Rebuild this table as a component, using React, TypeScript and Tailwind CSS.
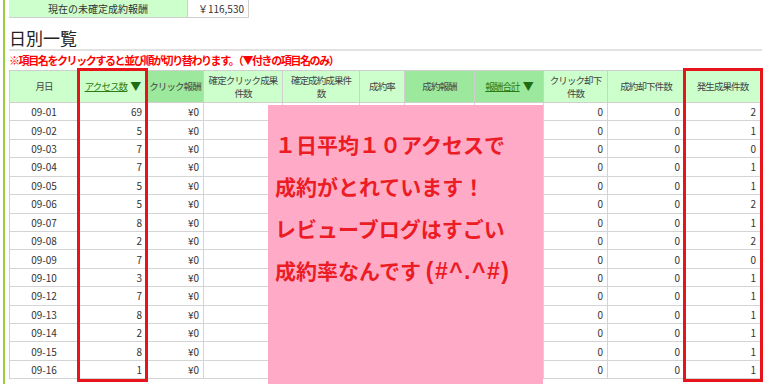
import React from "react";

const cols = "grid-cols-[69px_68px_57px_79px_77px_45px_70px_69px_64px_77px_76px]";

const rows: [string, number, number][] = [
  ["09-01", 69, 2],
  ["09-02", 5, 1],
  ["09-03", 7, 0],
  ["09-04", 7, 1],
  ["09-05", 5, 1],
  ["09-06", 5, 2],
  ["09-07", 8, 1],
  ["09-08", 2, 2],
  ["09-09", 7, 0],
  ["09-10", 3, 1],
  ["09-12", 7, 1],
  ["09-13", 8, 1],
  ["09-14", 2, 1],
  ["09-15", 8, 1],
  ["09-16", 1, 1],
];

function Head({ children, dark }: { children: React.ReactNode; dark?: boolean }) {
  return (
    <div
      className={`flex items-center justify-center overflow-hidden text-center text-[9.5px] leading-[13px] border-r border-b border-[#cfcfcf] whitespace-nowrap tracking-[-0.9px] ${
        dark ? "bg-[#9ce89c]" : "bg-[#ccffcc]"
      }`}
    >
      {children}
    </div>
  );
}

function Cell({ children, center }: { children?: React.ReactNode; center?: boolean }) {
  return (
    <div
      className={`flex items-center border-r border-b border-[#d4d4d4] bg-white px-[4px] ${
        center ? "justify-center" : "justify-end"
      }`}
    >
      {children}
    </div>
  );
}

function SortLink({ label }: { label: string }) {
  return (
    <span className="flex items-center gap-[3px]">
      <span className="underline text-[#2d7a0f]">{label}</span>
      <span className="text-[#1f6b12] text-[11px]">▼</span>
    </span>
  );
}

export default function App() {
  return (
    <div
      className="relative w-[765px] h-[384px] overflow-hidden bg-white text-[#333]"
      style={{ fontFamily: '"MS Gothic", "Noto Sans CJK JP", sans-serif' }}
    >
      <div className="ml-[3px] h-full border-l-2 border-[#9ccc3c] pl-[4px]">
        {/* summary row (cut off at the top) */}
        <div className="flex h-[18px] w-[240px] text-[10px]">
          <div className="flex w-[179px] items-center justify-center bg-[#ccffcc] border-r border-b border-[#cfcfcf]">
            現在の未確定成約報酬
          </div>
          <div className="flex w-[61px] items-center justify-end pr-[4px] border-r border-b border-[#cfcfcf]">
            ￥116,530
          </div>
        </div>

        <div className="flex h-[33px] items-end border-b-2 border-[#e2e2e2] pb-[1px] w-[753px]">
          <h2 className="text-[17px] leading-[21px] text-[#222]">日別一覧</h2>
        </div>

        <p className="flex h-[19px] items-center text-[11px] font-bold text-[#ff0000] tracking-[-1.4px]">
          ※項目名をクリックすると並び順が切り替わります。（▼付きの項目名のみ）
        </p>

        {/* daily table */}
        <div className="w-[751px] border-l border-t border-[#cfcfcf] text-[10px]">
          <div className={`grid ${cols} h-[32px] text-[#444]`}>
            <Head>月日</Head>
            <Head>
              <SortLink label="アクセス数" />
            </Head>
            <Head dark>クリック報酬</Head>
            <Head>
              確定クリック成果
              <br />
              件数
            </Head>
            <Head>
              確定成約成果件
              <br />
              数
            </Head>
            <Head>成約率</Head>
            <Head dark>成約報酬</Head>
            <Head dark>
              <SortLink label="報酬合計" />
            </Head>
            <Head>
              クリック却下
              <br />
              件数
            </Head>
            <Head>成約却下件数</Head>
            <Head>発生成果件数</Head>
          </div>

          {rows.map(([day, access, occurred]) => (
            <div key={day} className={`grid ${cols} h-[18.43px] text-[#333]`}>
              <Cell center>{day}</Cell>
              <Cell>{access}</Cell>
              <Cell>¥0</Cell>
              <Cell />
              <Cell />
              <Cell />
              <Cell />
              <Cell />
              <Cell>0</Cell>
              <Cell>0</Cell>
              <Cell>{occurred}</Cell>
            </div>
          ))}
        </div>
      </div>

      {/* highlight boxes */}
      <div className="absolute left-[77px] top-[68px] h-[314px] w-[71px] border-[3px] border-[#e8141c]" />
      <div className="absolute left-[683px] top-[68px] h-[314px] w-[80px] border-[3px] border-[#e8141c]" />

      {/* pink note */}
      <div
        className="absolute left-[268px] top-[105px] h-[290px] w-[275px] bg-[#ffabc8] pl-[7px] pt-[18px] text-[21px] font-bold leading-[42px] text-[#ec1c24] whitespace-nowrap"
        style={{ fontFamily: '"Noto Sans CJK JP", sans-serif' }}
      >
        <p>１日平均１０アクセスで</p>
        <p>成約がとれています！</p>
        <p>レビューブログはすごい</p>
        <p>
          成約率なんです{" "}
          <span
            className="text-[23px] tracking-[1.5px]"
            style={{ fontFamily: '"Liberation Sans", sans-serif' }}
          >
            (#^.^#)
          </span>
        </p>
      </div>
    </div>
  );
}
